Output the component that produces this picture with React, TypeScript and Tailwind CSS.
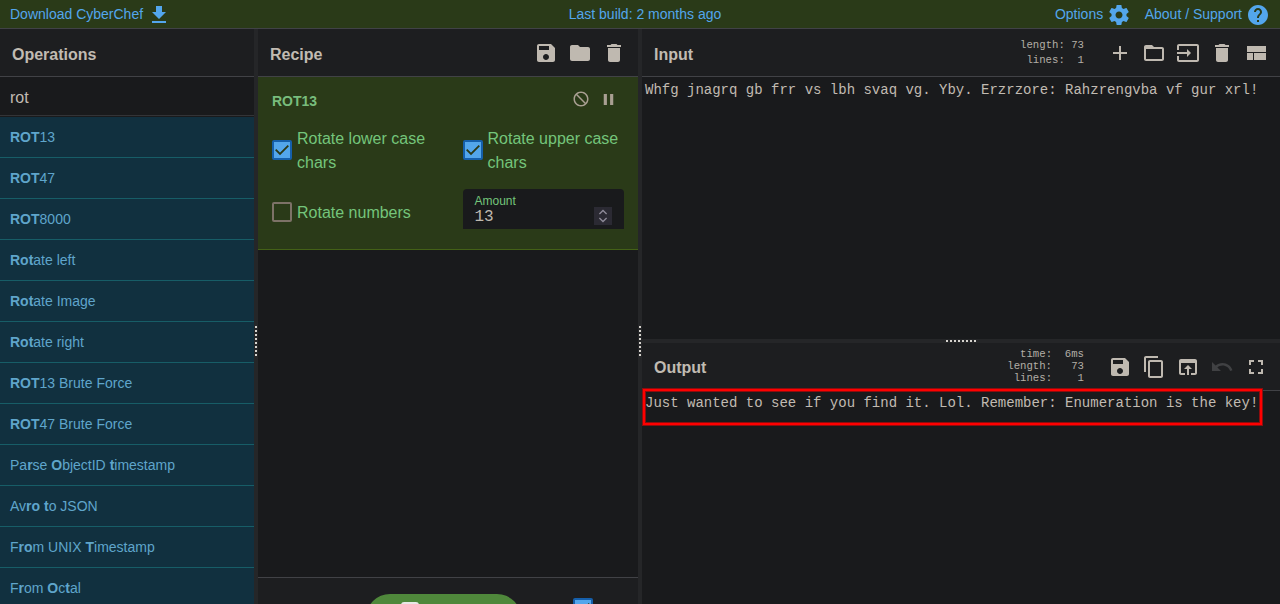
import React from "react";

const icons = {
  download: "M19 9h-4V3H9v6H5l7 7 7-7zM5 18v2h14v-2H5z",
  settings:
    "M19.43 12.98c.04-.32.07-.64.07-.98s-.03-.66-.07-.98l2.11-1.65c.19-.15.24-.42.12-.64l-2-3.46c-.12-.22-.39-.3-.61-.22l-2.49 1c-.52-.4-1.08-.73-1.69-.98l-.38-2.65C14.46 2.18 14.25 2 14 2h-4c-.25 0-.46.18-.49.42l-.38 2.65c-.61.25-1.17.59-1.69.98l-2.49-1c-.23-.09-.49 0-.61.22l-2 3.46c-.13.22-.07.49.12.64l2.11 1.65c-.04.32-.07.65-.07.98s.03.66.07.98l-2.11 1.65c-.19.15-.24.42-.12.64l2 3.46c.12.22.39.3.61.22l2.49-1c.52.4 1.08.73 1.69.98l.38 2.65c.03.24.24.42.49.42h4c.25 0 .46-.18.49-.42l.38-2.65c.61-.25 1.17-.59 1.69-.98l2.49 1c.23.09.49 0 .61-.22l2-3.46c.12-.22.07-.49-.12-.64l-2.11-1.65zM12 15.5c-1.93 0-3.5-1.57-3.5-3.5s1.57-3.5 3.5-3.5 3.5 1.57 3.5 3.5-1.57 3.5-3.5 3.5z",
  help: "M12 2C6.48 2 2 6.48 2 12s4.48 10 10 10 10-4.48 10-10S17.52 2 12 2zm1 17h-2v-2h2v2zm2.07-7.75l-.9.92C13.45 12.9 13 13.5 13 15h-2v-.5c0-1.1.45-2.1 1.17-2.83l1.24-1.26c.37-.36.59-.86.59-1.41 0-1.1-.9-2-2-2s-2 .9-2 2H8c0-2.21 1.79-4 4-4s4 1.79 4 4c0 .88-.36 1.68-.93 2.25z",
  save: "M17 3H5c-1.11 0-2 .9-2 2v14c0 1.1.89 2 2 2h14c1.1 0 2-.9 2-2V7l-4-4zm-5 16c-1.66 0-3-1.34-3-3s1.34-3 3-3 3 1.34 3 3-1.34 3-3 3zm3-10H5V5h10v4z",
  folder: "M10 4H4c-1.1 0-1.99.9-1.99 2L2 18c0 1.1.9 2 2 2h16c1.1 0 2-.9 2-2V8c0-1.1-.9-2-2-2h-8l-2-2z",
  trash: "M6 19c0 1.1.9 2 2 2h8c1.1 0 2-.9 2-2V7H6v12zM19 4h-3.5l-1-1h-5l-1 1H5v2h14V4z",
  block:
    "M12 2C6.48 2 2 6.48 2 12s4.48 10 10 10 10-4.48 10-10S17.52 2 12 2zm0 18c-4.42 0-8-3.58-8-8 0-1.85.63-3.55 1.69-4.9L16.9 18.31C15.55 19.37 13.85 20 12 20zm6.31-3.1L7.1 5.69C8.45 4.63 10.15 4 12 4c4.42 0 8 3.58 8 8 0 1.85-.63 3.55-1.69 4.9z",
  pause: "M6 19h4V5H6v14zm8-14v14h4V5h-4z",
  add: "M19 13h-6v6h-2v-6H5v-2h6V5h2v6h6v2z",
  folderOpen: "M20 6h-8l-2-2H4c-1.1 0-1.99.9-1.99 2L2 18c0 1.1.9 2 2 2h16c1.1 0 2-.9 2-2V8c0-1.1-.9-2-2-2zm0 12H4V8h16v10z",
  input:
    "M21 3.01H3c-1.1 0-2 .9-2 2V9h2V4.99h18v14.03H3V15H1v4.01c0 1.1.9 1.98 2 1.98h18c1.1 0 2-.88 2-1.98v-14c0-1.11-.9-2-2-2zM11 16l4-4-4-4v3H1v2h10v3z",
  layout: "M3 19h6v-7H3v7zm7 0h12v-7H10v7zM3 5v6h19V5H3z",
  copy: "M16 1H4c-1.1 0-2 .9-2 2v14h2V3h12V1zm3 4H8c-1.1 0-2 .9-2 2v14c0 1.1.9 2 2 2h11c1.1 0 2-.9 2-2V7c0-1.1-.9-2-2-2zm0 16H8V7h11v14z",
  openInBrowser: "M19 4H5c-1.11 0-2 .9-2 2v12c0 1.1.89 2 2 2h4v-2H5V8h14v10h-4v2h4c1.1 0 2-.9 2-2V6c0-1.1-.89-2-2-2zm-7 6l-4 4h3v6h2v-6h3l-4-4z",
  undo: "M12.5 8c-2.65 0-5.05.99-6.9 2.6L2 7v9h9l-3.62-3.62c1.39-1.16 3.16-1.88 5.12-1.88 3.54 0 6.55 2.31 7.6 5.5l2.37-.78C21.08 11.03 17.15 8 12.5 8z",
  fullscreen: "M7 14H5v5h5v-2H7v-3zm-2-4h2V7h3V5H5v5zm12 7h-3v2h5v-5h-2v3zM14 5v2h3v3h2V5h-5z",
};

function Icon({ name, className = "size-6" }: { name: keyof typeof icons; className?: string }) {
  return (
    <svg viewBox="0 0 24 24" fill="currentColor" className={`${className} shrink-0`}>
      <path d={icons[name]} />
    </svg>
  );
}

/* Names use *asterisks* around the letters that matched the search. */
const operations = [
  "*ROT*13",
  "*ROT*47",
  "*ROT*8000",
  "*Rot*ate left",
  "*Rot*ate Image",
  "*Rot*ate right",
  "*ROT*13 Brute Force",
  "*ROT*47 Brute Force",
  "Pa*r*se *O*bjectID *t*imestamp",
  "Av*ro* *t*o JSON",
  "F*ro*m UNIX *T*imestamp",
  "F*r*om *O*c*t*al",
];

function Operation({ name }: { name: string }) {
  return (
    <li className="h-[41px] shrink-0 border-b border-[#175d67] bg-[#11303f] pl-2.5 text-sm leading-10 whitespace-pre text-[#5fa5cb]">
      {name.split("*").map((part, i) => (i % 2 ? <b key={i}>{part}</b> : part))}
    </li>
  );
}

function Title({ text, className = "pt-1", children }: { text: string; className?: string; children?: React.ReactNode }) {
  return (
    <div className="flex h-12 shrink-0 items-center border-b border-[#414246] bg-[#1d1e20] px-3 text-[#c1bbb2]">
      <h2 className={`grow text-base font-bold ${className}`}>{text}</h2>
      {children}
    </div>
  );
}

function Stats({ rows, className }: { rows: string[]; className: string }) {
  return (
    <pre className={`mr-6 text-right font-['Liberation_Mono',monospace] text-[10.67px] text-[#b3aea6] ${className}`}>
      {rows.join("\n")}
    </pre>
  );
}

function Dots({ vertical }: { vertical?: boolean }) {
  return (
    <div className={vertical ? "flex flex-col gap-0.5" : "flex gap-0.5"}>
      {Array.from({ length: 8 }, (_, i) => (
        <i key={i} className="size-0.5 bg-[#d6d3ce]" />
      ))}
    </div>
  );
}

function Gutter() {
  return (
    <div className="flex w-1 shrink-0 flex-col items-center bg-[#252628] pt-[297px]">
      <Dots vertical />
    </div>
  );
}

function Check({ checked }: { checked?: boolean }) {
  return checked ? (
    <span className="block size-5 shrink-0 rounded-[2px] border-2 border-[#155fab] bg-[#53a6ec]">
      <svg viewBox="0 0 16 16" className="size-4" fill="none" stroke="#2b3918" strokeWidth="1.8">
        <path d="M1.7 7.7 6 12 14.3 3.7" />
      </svg>
    </span>
  ) : (
    <span className="block size-5 shrink-0 rounded-[2px] border-2 border-[#7d7267]" />
  );
}

export default function App() {
  return (
    <div className="flex h-[604px] w-[1280px] flex-col overflow-hidden bg-[#191a1c] font-['Liberation_Sans',sans-serif]">
      <header className="grid h-[29px] shrink-0 grid-cols-3 border-b border-[#414246] bg-[#2a3a18] text-sm leading-7 text-[#53a6ec]">
        <div className="flex pl-2.5">
          Download CyberChef
          <Icon name="download" className="mt-[3px] ml-1 size-6" />
        </div>
        <div className="pl-2.5 text-center">Last build: 2 months ago</div>
        <div className="flex justify-end pr-2.5">
          Options
          <Icon name="settings" className="mt-[3px] mr-3.5 ml-[3.5px] size-6" />
          About / Support
          <Icon name="help" className="mt-[3px] ml-1 size-6" />
        </div>
      </header>

      <main className="flex min-h-0 grow">
        <section className="flex w-[254px] shrink-0 flex-col overflow-hidden">
          <Title text="Operations" />
          <div className="mb-px h-[39px] shrink-0 border-b border-[#333437] pt-px pl-2.5 text-base leading-10 text-[#c1bbb2]">rot</div>
          <ul className="flex flex-col">
            {operations.map((op) => (
              <Operation key={op} name={op} />
            ))}
          </ul>
        </section>

        <Gutter />

        <section className="flex w-[380px] shrink-0 flex-col overflow-hidden">
          <Title text="Recipe">
            <div className="flex gap-2.5 text-[#bfb9b0]">
              <Icon name="save" />
              <Icon name="folder" />
              <Icon name="trash" />
            </div>
          </Title>
          <div className="h-[173px] shrink-0 border-b border-[#446117] bg-[#2a3a18] px-3.5 text-[#74c57b]">
            <div className="flex h-12 items-center">
              <h3 className="grow text-sm font-bold text-[#78bd7c]">ROT13</h3>
              <div className="mr-1.5 mb-1 flex items-center gap-[9px] text-[#a99f92]">
                <Icon name="block" className="size-[18px]" />
                <Icon name="pause" className="size-[19px]" />
              </div>
            </div>
            <div className="grid grid-cols-[190.5px_161px] text-base">
              <div className="flex h-12 items-center gap-[5px] pt-px">
                <Check checked />
                <span className="w-[140px] pt-0.5">Rotate lower case chars</span>
              </div>
              <div className="flex h-12 items-center gap-[5px] pt-px">
                <Check checked />
                <span className="w-[140px] pt-0.5">Rotate upper case chars</span>
              </div>
              <div className="mt-4 flex h-10 items-center gap-[5px] pt-1.5">
                <Check />
                <span className="mt-0.5">Rotate numbers</span>
              </div>
              <div className="mt-4 flex h-10 justify-between rounded-t bg-[#191a1c] px-3">
                <div className="pt-[5px]">
                  <div className="text-xs leading-[14px]">Amount</div>
                  <div className="font-['Liberation_Mono',monospace] leading-[18px] text-[#bfb9b0]">13</div>
                </div>
                <div className="mt-[18px] size-[18px] bg-[#2b2a33]">
                  <svg viewBox="0 0 18 18" className="size-[18px]" fill="none" stroke="#8f8b99" strokeWidth="1.3">
                    <path d="M5.4 7 9 3.5 12.6 7M5.4 11 9 14.5 12.6 11" />
                  </svg>
                </div>
              </div>
            </div>
          </div>
          <div className="grow" />
          <div className="flex h-[27px] shrink-0 items-start border-t border-[#414246] bg-[#1d1e20] pt-4 pl-[108px]">
            <div className="h-12 w-[155px] shrink-0 rounded-full bg-[#4f883b] pt-2 pl-[35px]">
              <svg viewBox="0 0 18 12" className="h-3 w-[18px]">
                <rect width="18" height="12" rx="3" fill="#e8e8e6" />
              </svg>
            </div>
            <div className="mt-1 ml-[52px]">
              <Check checked />
            </div>
          </div>
        </section>

        <Gutter />

        <section className="flex min-w-0 grow flex-col">
          <div className="flex h-[310px] shrink-0 flex-col">
            <Title text="Input">
              <Stats rows={["length: 73", "lines:  1"]} className="leading-[15px]" />
              <div className="flex gap-2.5 text-[#bfb9b0]">
                <Icon name="add" />
                <Icon name="folderOpen" />
                <Icon name="input" />
                <Icon name="trash" />
                <Icon name="layout" />
              </div>
            </Title>
            <pre className="pt-[3px] pl-[3px] font-['Liberation_Mono',monospace] text-sm leading-5 text-[#c1bbb2]">
              Whfg jnagrq gb frr vs lbh svaq vg. Yby. Erzrzore: Rahzrengvba vf gur xrl!
            </pre>
          </div>
          <div className="flex h-1 shrink-0 items-center justify-center bg-[#252628]">
            <Dots />
          </div>
          <div className="relative flex grow flex-col">
            <Title text="Output" className="pt-[3px]">
              <Stats rows={["time:  6ms", "length:   73", "lines:    1"]} className="pb-0.5 leading-3" />
              <div className="flex gap-2.5 text-[#bfb9b0]">
                <Icon name="save" />
                <Icon name="copy" />
                <Icon name="openInBrowser" />
                <Icon name="undo" className="size-6 text-[#404143]" />
                <Icon name="fullscreen" />
              </div>
            </Title>
            <pre className="pt-0.5 pl-[3px] font-['Liberation_Mono',monospace] text-sm leading-5 text-[#c1bbb2]">
              Just wanted to see if you find it. Lol. Remember: Enumeration is the key!
            </pre>
            <div className="absolute top-[46px] left-px h-9 w-[619px] border-2 border-[#ff0000] shadow-[0_0_0_1px_#8c0d0e,inset_0_0_0_1px_#8c0d0e]" />
          </div>
        </section>
      </main>
    </div>
  );
}
